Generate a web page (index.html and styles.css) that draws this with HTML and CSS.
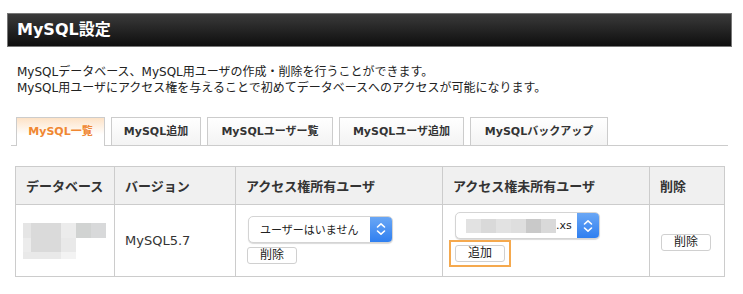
FILE: index.html
```html
<!DOCTYPE html>
<html lang="ja">
<head>
  <meta charset="UTF-8">
  <title>MySQL設定</title>
  <link rel="stylesheet" href="styles.css">
</head>
<body>
  <div class="panel">
    <h1 class="title">MySQL設定</h1>
    <p class="intro">MySQLデータベース、MySQL用ユーザの作成・削除を行うことができます。<br>MySQL用ユーザにアクセス権を与えることで初めてデータベースへのアクセスが可能になります。</p>

    <ul class="tabs">
      <li class="tab tab-list active">MySQL一覧</li>
      <li class="tab tab-add">MySQL追加</li>
      <li class="tab tab-users">MySQLユーザー覧</li>
      <li class="tab tab-useradd">MySQLユーザ追加</li>
      <li class="tab tab-backup">MySQLバックアップ</li>
    </ul>

    <table class="dbtable">
      <colgroup>
        <col class="col-db">
        <col class="col-ver">
        <col class="col-user">
        <col class="col-user">
        <col class="col-del">
      </colgroup>
      <thead>
        <tr>
          <th>データベース</th>
          <th>バージョン</th>
          <th>アクセス権所有ユーザ</th>
          <th>アクセス権未所有ユーザ</th>
          <th>削除</th>
        </tr>
      </thead>
      <tbody>
        <tr>
          <td>
            <div class="mosaic">
              <span class="m1"></span><span class="m2"></span><span class="m2"></span><span class="m3"></span><span class="m4"></span><span class="m5"></span>
              <span class="m3"></span><span class="m2"></span><span class="m2"></span><span class="m6"></span><span></span><span></span>
              <span class="m6"></span><span class="m6"></span><span class="m6"></span><span class="m7"></span><span></span><span></span>
            </div>
          </td>
          <td class="ver">MySQL5.7</td>
          <td class="users">
            <div class="select">
              <span class="select-text">ユーザーはいません</span>
              <span class="select-arrow">
                <svg width="10" height="14" viewBox="0 0 10 14"><path d="M1.5 5 L5 1.8 L8.5 5 M1.5 9 L5 12.2 L8.5 9" fill="none" stroke="#fff" stroke-width="1.6" stroke-linecap="round" stroke-linejoin="round"/></svg>
              </span>
            </div>
            <button class="btn">削除</button>
          </td>
          <td class="users">
            <div class="select">
              <span class="select-text">
                <span class="blur">
                  <span class="b1"></span><span class="b2"></span><span class="b1"></span><span class="b3"></span><span class="b4"></span><span class="b2"></span>
                </span>.xs
              </span>
              <span class="select-arrow">
                <svg width="10" height="14" viewBox="0 0 10 14"><path d="M1.5 5 L5 1.8 L8.5 5 M1.5 9 L5 12.2 L8.5 9" fill="none" stroke="#fff" stroke-width="1.6" stroke-linecap="round" stroke-linejoin="round"/></svg>
              </span>
            </div>
            <span class="focus-ring"><button class="btn">追加</button></span>
          </td>
          <td class="del"><button class="btn">削除</button></td>
        </tr>
      </tbody>
    </table>
  </div>
</body>
</html>
```

FILE: styles.css
```css
body {
  margin: 0;
  background: #fff;
  color: #222;
  font-family: "DejaVu Sans", "Noto Sans CJK JP", sans-serif;
}

.panel {
  padding: 13px 11px 0 7px;
}

.title {
  margin: 0;
  height: 32px;
  line-height: 32px;
  padding-left: 9px;
  font-size: 16px;
  font-weight: bold;
  color: #fff;
  border: 1px solid #777;
  background: linear-gradient(#3a3a3a, #0e0e0e);
}

.intro {
  margin: 17px 0 0 10px;
  font-size: 12px;
  line-height: 16px;
  color: #222;
}

.tabs {
  list-style: none;
  display: flex;
  gap: 6px;
  margin: 21px 4px 0 4px;
  padding: 0 0 0 5px;
  border-bottom: 1px solid #ccc;
}

.tab {
  box-sizing: border-box;
  height: 28px;
  line-height: 28px;
  text-align: center;
  font-size: 11px;
  font-weight: bold;
  color: #333;
  border: 1px solid #ccc;
  border-bottom: none;
  background: linear-gradient(#fff, #f3f3f3);
  margin-bottom: -1px;
}

.tab-list { width: 89px; }
.tab-add { width: 90px; }
.tab-users { width: 126px; }
.tab-useradd { width: 125px; }
.tab-backup { width: 138px; }

.tab.active {
  height: 29px;
  color: #f08732;
  background: linear-gradient(#fde2c6, #fff 60%);
}

.dbtable {
  margin: 20px 0 0 8px;
  width: 709px;
  table-layout: fixed;
  border-collapse: collapse;
  font-size: 13px;
}

.col-db { width: 99px; }
.col-ver { width: 121px; }
.col-user { width: 207px; }
.col-del { width: 75px; }

.dbtable th,
.dbtable td {
  border: 1px solid #ccc;
  padding: 0 10px;
  text-align: left;
}

.dbtable th {
  height: 37px;
  background: #f0f0f0;
  color: #333;
  font-weight: bold;
  white-space: nowrap;
}

.dbtable td {
  height: 71px;
  vertical-align: middle;
  color: #333;
}

.dbtable td.users {
  padding-left: 12px;
}

.mosaic {
  display: grid;
  grid-template-columns: 8px 15px 15px 15px 15px 15px;
  grid-template-rows: 15px 14px 7px;
  margin-left: -3px;
}

.m1 { background: #e5e5e5; }
.m2 { background: #dadada; }
.m3 { background: #ececec; }
.m4 { background: #d1d3d2; }
.m5 { background: #d8d9da; }
.m6 { background: #e9e9e9; }
.m7 { background: #f3f3f3; }

.select {
  display: flex;
  width: 143px;
  height: 25px;
  border: 1px solid #d4d4d4;
  border-radius: 5px;
  box-shadow: 0 1px 1px rgba(0, 0, 0, 0.15);
  background: #fff;
  overflow: hidden;
  margin-top: -2px;
}

.select-text {
  flex: 1;
  display: flex;
  align-items: center;
  padding-left: 11px;
  font-size: 11px;
  color: #222;
  white-space: nowrap;
  overflow: hidden;
}

.select-arrow {
  width: 22px;
  display: flex;
  align-items: center;
  justify-content: center;
  background: linear-gradient(#6aa7f5, #2f7ff0);
}

.blur {
  display: inline-flex;
  height: 14px;
  margin-left: -1px;
}

.blur span { width: 15px; height: 14px; }
.b1 { background: #e2e2e2; }
.b2 { background: #d9d9d9; }
.b3 { background: #dedede; }
.b4 { background: #c9c9c9; }

.btn {
  display: block;
  width: 50px;
  height: 17px;
  margin: 4px 0 0 -1px;
  padding: 0;
  font-family: "DejaVu Sans", "Noto Sans CJK JP", sans-serif;
  font-size: 12px;
  line-height: 15px;
  color: #222;
  background: #fff;
  border: 1px solid #d0d0d0;
  border-radius: 3px;
}

.focus-ring {
  display: inline-block;
  margin: 1px 0 0 -6px;
  padding: 3px 4px;
  border: 2px solid #f5a94e;
}

.focus-ring .btn {
  margin: 0;
}

.del .btn {
  margin-left: 1px;
}
```
